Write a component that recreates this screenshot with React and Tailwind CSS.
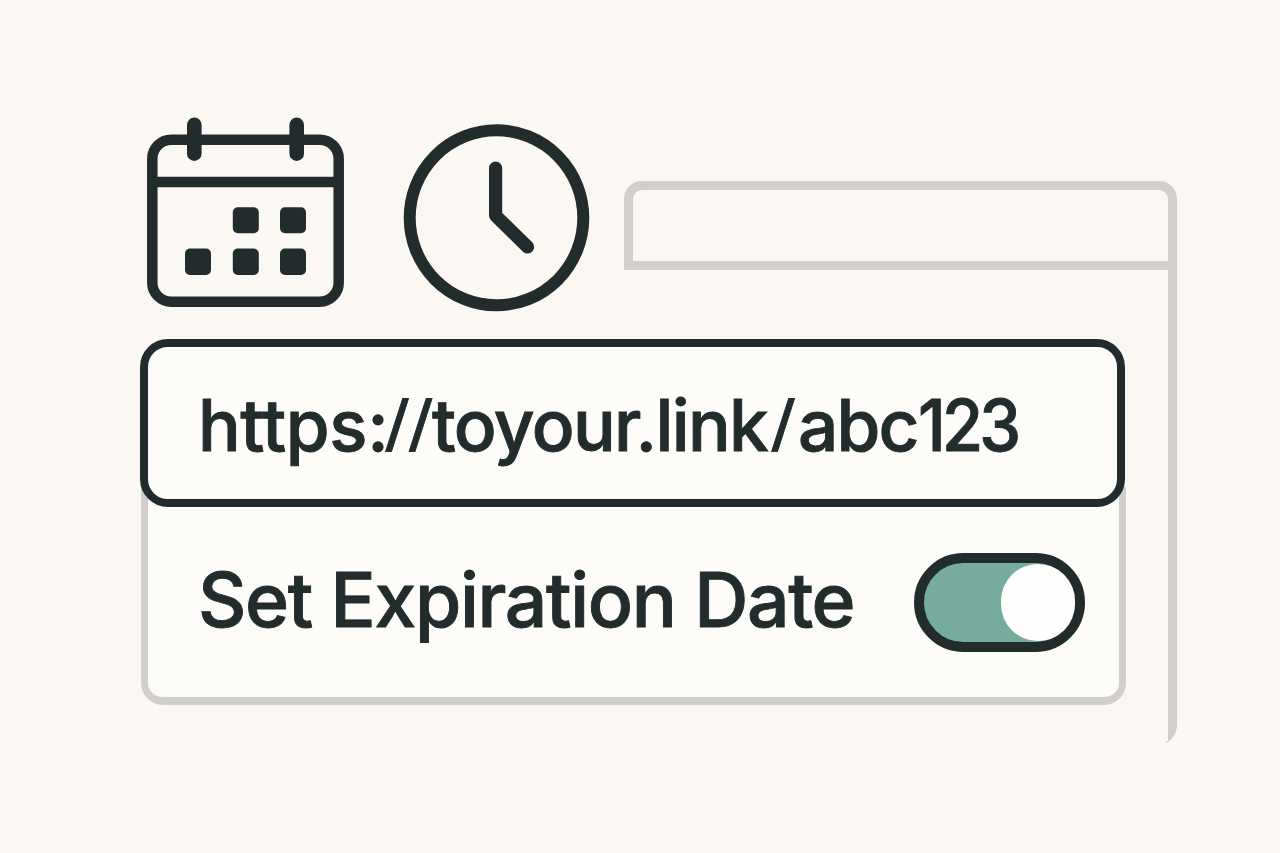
const CalendarIcon = () => (
  <svg width="197" height="190" viewBox="0 0 197 190" fill="none" className="mt-[117px] shrink-0 text-[#222c2d]">
    <rect x="5.3" y="22.7" width="186.4" height="162" rx="19" stroke="currentColor" strokeWidth="10.5" />
    <path d="M5 65H192" stroke="currentColor" strokeWidth="10.4" />
    <path d="M47.3 7.8V36.7M149.7 7.8V36.7" stroke="currentColor" strokeWidth="14.6" strokeLinecap="round" />
    <g fill="currentColor">
      <rect x="85.8" y="90.2" width="26" height="26" rx="5" />
      <rect x="133" y="90.2" width="26" height="26" rx="5" />
      <rect x="38" y="131.5" width="26" height="26.5" rx="5" />
      <rect x="85.8" y="131.5" width="26" height="26.5" rx="5" />
      <rect x="133" y="131.5" width="26" height="26.5" rx="5" />
    </g>
  </svg>
);

const ClockIcon = () => (
  <svg width="187" height="188" viewBox="0 0 187 188" fill="none" className="mt-[124px] ml-[59px] shrink-0 text-[#222c2d]">
    <ellipse cx="93.5" cy="93.8" rx="86.8" ry="87.5" stroke="currentColor" strokeWidth="12" />
    <path d="M92.6 44.2V91.6L124.6 123" stroke="currentColor" strokeWidth="13.2" strokeLinecap="round" strokeLinejoin="round" />
  </svg>
);

const Toggle = () => (
  <div className="flex h-[99px] w-[171px] items-center justify-end rounded-full border-[10.5px] border-[#222c2d] bg-[#76ac9d]">
    <div className="h-[77px] w-[74px] rounded-full bg-[#fffefc]"></div>
  </div>
);

const App = () => {
  return (
    <div className="h-[853px] w-[1280px] overflow-hidden bg-[#fbf7f2] font-['Inter',sans-serif] font-medium text-[#222c2d] [-webkit-text-stroke:0.9px_#222c2d]">
      <div className="flex h-[339px] pl-[147px]">
        <CalendarIcon />
        <ClockIcon />
        <div className="mt-[181px] ml-[34px] flex w-[553px] flex-col">
          <div className="h-[89px] rounded-t-[18px] border-[9px] border-[#d1cfca]"></div>
          <div className="grow border-r-[9px] border-[#d1cfca]"></div>
        </div>
      </div>

      <div className="flex items-start">
        <div className="ml-[140px] w-[986px]">
          <div className="relative z-10 flex h-[168px] w-[985px] items-center rounded-[28px] border-8 border-[#222c2d] bg-[#fefcf9] pt-[4px] pl-[50px]">
            <div className="flex items-baseline text-[71px] leading-none whitespace-nowrap">
              <span className="w-[188px] tracking-[-0.4px]">https:</span>
              <span className="w-[46px] text-[61px] leading-none tracking-[0.8px]">
                <span className="inline-block -translate-y-[6px] -skew-x-3">//</span>
              </span>
              <span className="w-[340px] tracking-[-1.6px]">toyour.link</span>
              <span className="w-[26px] text-[61px] leading-none">
                <span className="inline-block -translate-y-[6px] -skew-x-3">/</span>
              </span>
              <span className="w-[120px] tracking-[-1.8px]">abc</span>
              <span className="inline-block origin-left scale-x-94 tracking-[-4px]">123</span>
            </div>
          </div>
          <div className="-mt-[20px] ml-px flex h-[218px] items-center justify-between rounded-b-[22px] border-x-[7px] border-b-8 border-[#d1cfca] bg-[#fefcf9] pt-[20px] pr-[34px] pl-[50px]">
            <span className="-mt-[5px] text-[75px] leading-none tracking-[-1.35px] whitespace-nowrap">Set Expiration Date</span>
            <Toggle />
          </div>
        </div>
        <div className="ml-[39px] w-[12px]">
          <div className="ml-[3px] h-[386px] bg-[#d1cfca]"></div>
          <svg width="12" height="19" viewBox="0 0 12 19" className="block text-[#d1cfca]">
            <path d="M3 0H12C12 8 7 15.5 0 18.5L3 15Z" fill="currentColor" />
          </svg>
        </div>
      </div>
    </div>
  );
};

export default App;
